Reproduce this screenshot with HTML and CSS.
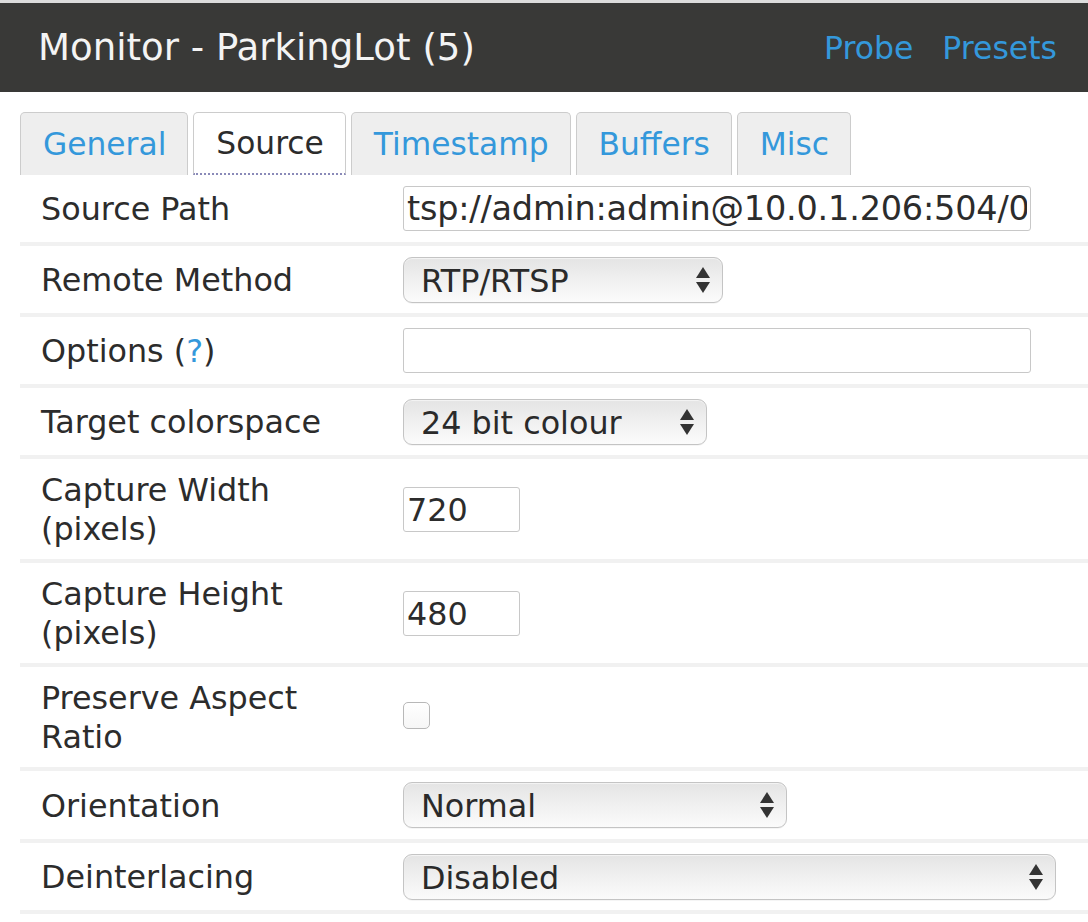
FILE: index.html
```html
<!DOCTYPE html>
<html>
<head>
<meta charset="utf-8">
<link rel="stylesheet" href="styles.css">
<title>Monitor - ParkingLot (5)</title>
</head>
<body>
<div class="topline"></div>
<header class="bar">
  <h1 class="title">Monitor - ParkingLot (5)</h1>
  <nav class="actions">
    <a class="link" href="#">Probe</a>
    <a class="link" href="#">Presets</a>
  </nav>
</header>
<ul class="tabs">
  <li class="tab"><a class="link" href="#">General</a></li>
  <li class="tab active"><span>Source</span></li>
  <li class="tab"><a class="link" href="#">Timestamp</a></li>
  <li class="tab"><a class="link" href="#">Buffers</a></li>
  <li class="tab"><a class="link" href="#">Misc</a></li>
</ul>
<div class="form">
  <div class="row">
    <div class="label">Source Path</div>
    <div class="field"><input class="text w-wide path" type="text" value="tsp://admin:admin@10.0.1.206:504/0"></div>
  </div>
  <div class="row">
    <div class="label">Remote Method</div>
    <div class="field"><span class="select w-remote"><span class="sel-text">RTP/RTSP</span><svg class="arrows" width="14" height="26" viewBox="0 0 14 26"><polygon points="7,0 14,11 0,11"/><polygon points="0,15 14,15 7,26"/></svg></span></div>
  </div>
  <div class="row">
    <div class="label">Options (<a class="link" href="#">?</a>)</div>
    <div class="field"><input class="text w-wide" type="text" value=""></div>
  </div>
  <div class="row">
    <div class="label">Target colorspace</div>
    <div class="field"><span class="select w-color"><span class="sel-text">24 bit colour</span><svg class="arrows" width="14" height="26" viewBox="0 0 14 26"><polygon points="7,0 14,11 0,11"/><polygon points="0,15 14,15 7,26"/></svg></span></div>
  </div>
  <div class="row">
    <div class="label">Capture Width<br>(pixels)</div>
    <div class="field"><input class="text w-num" type="text" value="720"></div>
  </div>
  <div class="row">
    <div class="label">Capture Height<br>(pixels)</div>
    <div class="field"><input class="text w-num" type="text" value="480"></div>
  </div>
  <div class="row">
    <div class="label">Preserve Aspect<br>Ratio</div>
    <div class="field"><span class="check"></span></div>
  </div>
  <div class="row">
    <div class="label">Orientation</div>
    <div class="field"><span class="select w-orient"><span class="sel-text">Normal</span><svg class="arrows" width="14" height="26" viewBox="0 0 14 26"><polygon points="7,0 14,11 0,11"/><polygon points="0,15 14,15 7,26"/></svg></span></div>
  </div>
  <div class="row">
    <div class="label">Deinterlacing</div>
    <div class="field"><span class="select w-deint"><span class="sel-text">Disabled</span><svg class="arrows" width="14" height="26" viewBox="0 0 14 26"><polygon points="7,0 14,11 0,11"/><polygon points="0,15 14,15 7,26"/></svg></span></div>
  </div>
</div>
</body>
</html>
```
FILE: styles.css
```css
* { box-sizing: border-box; }
html, body {
  margin: 0;
  padding: 0;
  background: #ffffff;
  font-family: "DejaVu Sans", Verdana, sans-serif;
  color: #2c2c2c;
  overflow: hidden;
}
.topline {
  height: 3px;
  background: #dcdcdc;
}
.bar {
  height: 89px;
  background: #393937;
  display: flex;
  align-items: center;
  justify-content: space-between;
  padding: 0 31px 0 38px;
}
.title {
  margin: 0;
  font-weight: normal;
  font-size: 37.1px;
  color: #f4f4f4;
}
.actions {
  display: flex;
  gap: 29px;
  font-size: 31.5px;
}
.link {
  color: #3498db;
  text-decoration: none;
}
.tabs {
  list-style: none;
  margin: 20px 0 0 20px;
  padding: 0;
  display: flex;
  gap: 5px;
  font-size: 31.3px;
}
.tab {
  height: 63px;
  display: flex;
  align-items: center;
  padding: 0 21px 0 22px;
  background: #eeeeee;
  border: 1px solid #cccccc;
  border-bottom: none;
  border-radius: 5px 5px 0 0;
}
.tab.active {
  background: #ffffff;
  color: #2c2c2c;
  border-bottom: 2px dotted #8a8ab8;
}
.form {
  margin-left: 20px;
  width: 1068px;
}
.row {
  display: grid;
  grid-template-columns: 363px 1fr;
  align-items: center;
  padding: 11px 0 10.5px;
  border-bottom: 4px solid #f1f1f1;
  font-size: 31.8px;
  line-height: 39.3px;
}
.label {
  padding-left: 21px;
}
.field {
  padding-left: 20px;
  display: flex;
  align-items: center;
}
.text {
  height: 45px;
  border: 1px solid #c8c8c8;
  border-radius: 3px;
  padding: 0 3px;
  font-family: "DejaVu Sans", Verdana, sans-serif;
  font-size: 31.8px;
  color: #2c2c2c;
  background: #ffffff;
  outline: none;
}
.text.path {
  font-size: 33.5px;
  letter-spacing: -0.2px;
}
.w-wide { width: 628px; }
.w-num { width: 117px; }
.select {
  position: relative;
  display: inline-flex;
  align-items: center;
  height: 46px;
  padding-left: 17px;
  padding-top: 2px;
  border: 1px solid #c4c4c4;
  border-radius: 9px;
  background: linear-gradient(to bottom, #e4e4e4 0%, #efefef 45%, #fbfbfb 100%);
  box-shadow: inset 0 1px 1px rgba(255,255,255,0.6), 0 1px 0 rgba(0,0,0,0.04);
  font-size: 31.8px;
  color: #2a2a2a;
}
.sel-text {
  line-height: 1;
}
.arrows {
  position: absolute;
  right: 12px;
  top: 50%;
  margin-top: -13px;
  fill: #333333;
}
.w-remote { width: 320px; }
.w-color { width: 304px; }
.w-orient { width: 384px; }
.w-deint { width: 653px; }
.check {
  display: inline-block;
  width: 27px;
  height: 27px;
  margin-top: -3px;
  border: 1px solid #b8b8b8;
  border-radius: 5px;
  background: linear-gradient(to bottom, #ffffff, #f6f6f6);
}
```
